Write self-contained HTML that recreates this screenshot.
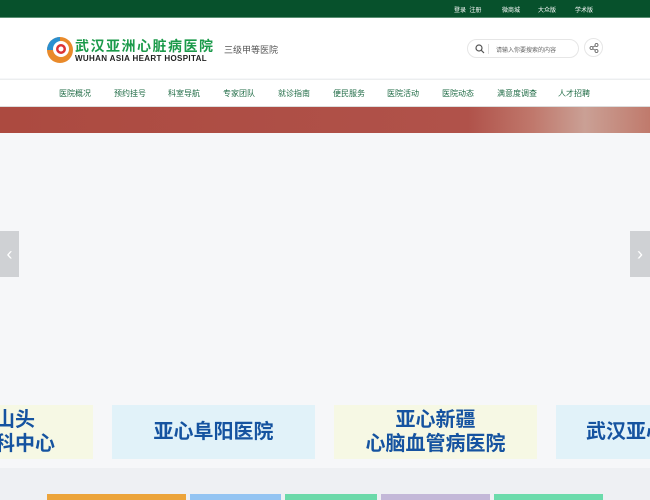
<!DOCTYPE html>
<html><head><meta charset="utf-8"><style>
*{margin:0;padding:0;box-sizing:border-box}
body{width:650px;height:500px;overflow:hidden;font-family:"Liberation Sans","Noto Sans CJK SC",sans-serif;background:#f6f7f9;position:relative}
.top{position:absolute;left:0;top:0;width:650px;height:18px;background:#07512c;border-bottom:1px solid #5a8f73}
.top span{position:absolute;top:5px;font-size:6px;color:#fff}
.hdr{position:absolute;top:18px;left:0;width:650px;height:60px;background:#fff}
.nav{position:absolute;top:79px;left:0;width:650px;height:27px;background:#fff;border-top:1px solid #eceeef}
.nav span{position:absolute;top:8px;font-size:8px;color:#1f6b45}
.banner{position:absolute;top:106px;left:0;width:650px;height:27px;background:linear-gradient(90deg,#ac4a40 0%,#b0524a 72%,#c0786c 82%,#caa095 90%,#c07a6c 100%);border-top:1px solid #ddd}
.arrow{position:absolute;top:231px;width:19px;height:46px;background:#cfd1d4;color:#fff;font-size:18px;line-height:46px;text-align:center}
.clip{position:absolute;left:0;top:405px;width:650px;height:54px;overflow:hidden}
.card{position:absolute;top:0;height:54px;color:#1553a0;font-weight:bold;font-size:20px;text-align:center;line-height:24px;display:flex;align-items:center;justify-content:center;white-space:nowrap;overflow:hidden}
.bot{position:absolute;top:468px;left:0;width:650px;height:32px;background:#eef0f3}
.bar{position:absolute;top:494px;height:6px}
</style></head><body>
<div class="top">
<span style="left:454px">登录&nbsp;&nbsp;注册</span>
<span style="left:502px">微商城</span>
<span style="left:538px">大众版</span>
<span style="left:575px">学术版</span>
</div>
<div class="hdr">
<svg style="position:absolute;left:46px;top:18px" width="28" height="28" viewBox="0 0 28 28">
<circle cx="14" cy="14" r="13" fill="#e98a2a"/>
<path d="M14 1 A13 13 0 0 0 1 14 L7 14 A7 7 0 0 1 14 7Z" fill="#2a8fd0"/>
<circle cx="15" cy="13" r="8" fill="#fff"/>
<circle cx="15" cy="13" r="5" fill="#d33"/>
<circle cx="15" cy="13" r="2.5" fill="#fff"/>
</svg>
<div style="position:absolute;left:75px;top:20px;font-size:14px;font-weight:bold;color:#1b9a4a;letter-spacing:1.5px;line-height:16px">武汉亚洲心脏病医院</div>
<div style="position:absolute;left:75px;top:36px;font-size:8px;font-weight:bold;color:#222;letter-spacing:0.35px;line-height:9px">WUHAN ASIA HEART HOSPITAL</div>
<div style="position:absolute;left:224px;top:25px;font-size:9px;color:#555">三级甲等医院</div>
<div style="position:absolute;left:467px;top:21px;width:112px;height:19px;border:1px solid #e6e6e6;border-radius:10px">
<svg style="position:absolute;left:7px;top:4px" width="10" height="10" viewBox="0 0 10 10"><circle cx="4" cy="4" r="3" fill="none" stroke="#555" stroke-width="1.2"/><path d="M6.3 6.3L9 9" stroke="#555" stroke-width="1.2"/></svg>
<div style="position:absolute;left:20px;top:4px;width:1px;height:10px;background:#ddd"></div>
<span style="position:absolute;left:28px;top:5px;font-size:6px;color:#666">请输入你要搜索的内容</span>
</div>
<div style="position:absolute;left:584px;top:20px;width:19px;height:19px;border:1px solid #e6e6e6;border-radius:50%">
<svg style="position:absolute;left:4px;top:4px" width="10" height="10" viewBox="0 0 10 10"><circle cx="2.5" cy="5" r="1.5" fill="none" stroke="#555" stroke-width=".8"/><circle cx="7.5" cy="2" r="1.5" fill="none" stroke="#555" stroke-width=".8"/><circle cx="7.5" cy="8" r="1.5" fill="none" stroke="#555" stroke-width=".8"/><path d="M3.8 4.2L6.2 2.8M3.8 5.8L6.2 7.2" stroke="#555" stroke-width=".8"/></svg>
</div>
</div>
<div class="nav">
<span style="left:59px">医院概况</span><span style="left:114px">预约挂号</span><span style="left:168px">科室导航</span><span style="left:223px">专家团队</span><span style="left:278px">就诊指南</span><span style="left:333px">便民服务</span><span style="left:387px">医院活动</span><span style="left:442px">医院动态</span><span style="left:497px">满意度调查</span><span style="left:558px">人才招聘</span>
</div>
<div class="banner"></div>
<div class="arrow" style="left:0">&#8249;</div>
<div class="arrow" style="left:630px;width:20px">&#8250;</div>
<div class="clip">
<div class="card" style="left:0;width:93px;background:#f6f8e4;justify-content:flex-start;text-align:left"><div style="margin-left:-5px">山头<br>科中心</div></div>
<div class="card" style="left:112px;width:203px;background:#e1f2f9">亚心阜阳医院</div>
<div class="card" style="left:334px;width:203px;background:#f6f8e4"><div>亚心新疆<br>心脑血管病医院</div></div>
<div class="card" style="left:556px;width:94px;background:#e1f2f9;justify-content:flex-start;padding-left:30px">武汉亚心</div>
</div>
<div class="bot"></div>
<div class="bar" style="left:47px;width:139px;background:#eca43a"></div>
<div class="bar" style="left:190px;width:91px;background:#93c4f2"></div>
<div class="bar" style="left:285px;width:92px;background:#6bd9a9"></div>
<div class="bar" style="left:381px;width:109px;background:#c3b8d8"></div>
<div class="bar" style="left:494px;width:109px;background:#6bdbab"></div>
</body></html>
